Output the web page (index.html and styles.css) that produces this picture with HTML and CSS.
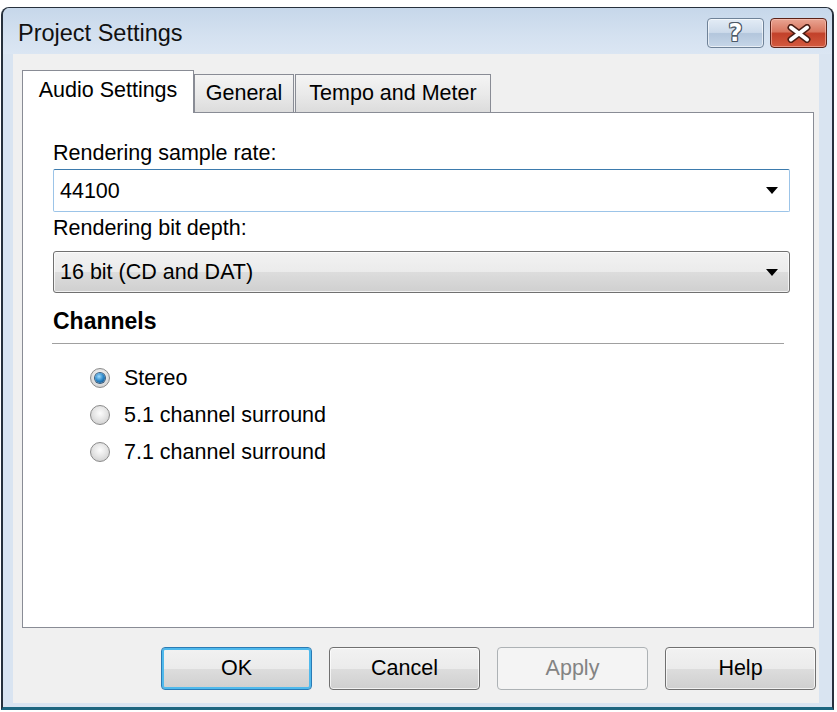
FILE: index.html
```html
<!DOCTYPE html>
<html lang="en">
<head>
    <meta charset="UTF-8">
    <title>Project Settings</title>
    <link rel="stylesheet" href="styles.css">
</head>
<body>
    <div class="window">
        <!-- Title bar -->
        <div class="titlebar">
            <span class="title">Project Settings</span>
            <div class="caption-buttons">
                <span class="cap-btn help-btn">?</span>
                <span class="cap-btn close-btn">
                    <svg width="26" height="19" viewBox="0 0 26 19">
                        <path d="M5 3.5 L21 15.5 M21 3.5 L5 15.5" stroke="#4a1d14" stroke-width="7" stroke-linecap="round"/>
                        <path d="M5 3.5 L21 15.5 M21 3.5 L5 15.5" stroke="#fff" stroke-width="4" stroke-linecap="round"/>
                    </svg>
                </span>
            </div>
        </div>

        <div class="client">
            <!-- Tabs -->
            <div class="tabs">
                <div class="tab active">Audio Settings</div>
                <div class="tab general">General</div>
                <div class="tab tempo">Tempo and Meter</div>
            </div>

            <div class="panel">
                <div class="label">Rendering sample rate:</div>
                <div class="combo editable">
                    <span>44100</span>
                    <span class="arrow"></span>
                </div>

                <div class="label depth">Rendering bit depth:</div>
                <div class="combo dropdown">
                    <span>16 bit (CD and DAT)</span>
                    <span class="arrow"></span>
                </div>

                <div class="group-title">Channels</div>
                <div class="separator"></div>

                <div class="radios">
                    <div class="radio checked"><span class="circle"></span>Stereo</div>
                    <div class="radio"><span class="circle"></span>5.1 channel surround</div>
                    <div class="radio"><span class="circle"></span>7.1 channel surround</div>
                </div>
            </div>

            <!-- Dialog buttons -->
            <div class="buttons">
                <div class="btn default">OK</div>
                <div class="btn">Cancel</div>
                <div class="btn disabled">Apply</div>
                <div class="btn">Help</div>
            </div>
        </div>
    </div>
</body>
</html>
```

FILE: styles.css
```css
* {
    margin: 0;
    padding: 0;
    box-sizing: border-box;
}
body {
    font-family: "Liberation Sans", Arial, sans-serif;
    font-size: 21.5px;
    color: #000;
    background: #fff;
}

/* Window frame */
.window {
    width: 833px;
    height: 703px;
    margin: 7px 0 0 1px;
    display: flex;
    flex-direction: column;
    background: #d9e4f1;
    border: 2px solid #27313d;
    border-top-width: 1px;
    border-bottom: 3px solid #1d6680;
    border-radius: 8px 8px 0 0;
    padding-bottom: 4px;
}
.titlebar {
    height: 46px;
    flex-shrink: 0;
    display: flex;
    align-items: center;
    justify-content: space-between;
    padding: 4px 5px 0 15px;
    background: linear-gradient(#c6d7ea, #d4e1f0 60%, #dbe6f3);
    border-radius: 7px 7px 0 0;
}
.title {
    font-size: 23.5px;
    color: #111;
}
.caption-buttons {
    display: flex;
    gap: 6px;
}
.cap-btn {
    width: 57px;
    height: 30px;
    border-radius: 4px;
    display: flex;
    align-items: center;
    justify-content: center;
}
.help-btn {
    border: 1px solid #6f8298;
    background: linear-gradient(#e3ecf6, #ccdaea 48%, #b3c6dc 52%, #c6d6e8);
    box-shadow: inset 0 0 0 1px rgba(255, 255, 255, 0.6);
    font-family: "DejaVu Sans", sans-serif;
    font-weight: bold;
    font-size: 24px;
    line-height: 1;
    color: #fff;
    text-shadow: 1px 0 #4d5a68, -1px 0 #4d5a68, 0 1px #4d5a68, 0 -1px #4d5a68,
        1px 1px #4d5a68, -1px -1px #4d5a68, 1px -1px #4d5a68, -1px 1px #4d5a68;
}
.close-btn {
    border: 1px solid #5b2218;
    background: linear-gradient(#e9a593, #d8755e 45%, #c2412a 52%, #d35a3f);
    box-shadow: inset 0 0 0 1px rgba(255, 210, 200, 0.5);
}

/* Client area */
.client {
    flex: 1;
    margin: 0 13px 0 10px;
    background: #f0f0f0;
    padding: 16px 3px 13px 9px;
    display: flex;
    flex-direction: column;
}
.tabs {
    display: flex;
    align-items: flex-end;
    height: 42px;
}
.tab {
    height: 38px;
    border: 1px solid #898c95;
    border-bottom: none;
    background: linear-gradient(#f4f4f4, #eaeaea 50%, #dcdcdc);
    display: flex;
    align-items: center;
    justify-content: center;
}
.tab.active {
    width: 172px;
    height: 43px;
    margin-bottom: -1px;
    background: #fff;
    position: relative;
    z-index: 1;
    padding-bottom: 3px;
}
.tab.general {
    width: 100px;
}
.tab.tempo {
    width: 196px;
    margin-left: 1px;
}
.panel {
    flex: 1;
    margin-right: 2px;
    background: #fff;
    border: 1px solid #898c95;
    padding: 27px 23px 0 30px;
}
.label {
    line-height: 26px;
}
.label.depth {
    margin-top: 3px;
}
.combo {
    display: flex;
    align-items: center;
    justify-content: space-between;
    line-height: 26px;
    padding: 0 11px 0 6px;
}
.combo.editable {
    height: 43px;
    margin-top: 3px;
    border: 1px solid #9cc4e8;
    border-top-color: #3d7bad;
    border-radius: 2px;
}
.combo.dropdown {
    height: 42px;
    margin-top: 10px;
    border: 1px solid #707070;
    border-radius: 3px;
    background: linear-gradient(#f2f2f2, #ebebeb 50%, #dddddd 50%, #cfcfcf);
    box-shadow: inset 0 0 0 1px rgba(255, 255, 255, 0.7);
}
.arrow {
    width: 0;
    height: 0;
    border-left: 6px solid transparent;
    border-right: 6px solid transparent;
    border-top: 7px solid #000;
}
.group-title {
    margin-top: 14px;
    font-size: 23px;
    font-weight: bold;
    line-height: 28px;
}
.separator {
    margin: 8px 6px 0 -1px;
    height: 2px;
    border-top: 1px solid #a0a0a0;
    border-bottom: 1px solid #fff;
}
.radios {
    margin-top: 14px;
    padding-left: 37px;
}
.radio {
    height: 37px;
    display: flex;
    align-items: center;
    line-height: 26px;
}
.circle {
    width: 20px;
    height: 20px;
    margin-right: 14px;
    border-radius: 50%;
    border: 1px solid #8b8b8b;
    background: radial-gradient(circle at 50% 40%, #fdfdfd, #e3e3e3 50%, #c4c4c4);
    display: flex;
    align-items: center;
    justify-content: center;
}
.radio.checked .circle::after {
    content: "";
    width: 10px;
    height: 10px;
    border-radius: 50%;
    background: radial-gradient(circle at 40% 35%, #9fdcff, #2a86c8 50%, #0b3f70);
    box-shadow: 0 0 0 1px #3c5f7e;
}

/* Buttons */
.buttons {
    margin-top: 19px;
    display: flex;
    justify-content: flex-end;
    gap: 17px;
}
.btn {
    width: 151px;
    height: 43px;
    border: 1px solid #707070;
    border-radius: 4px;
    background: linear-gradient(#f2f2f2, #ebebeb 50%, #dddddd 50%, #cfcfcf);
    box-shadow: inset 0 0 0 1px rgba(255, 255, 255, 0.7);
    display: flex;
    align-items: center;
    justify-content: center;
}
.btn.default {
    border: 1px solid #2a7bb5;
    box-shadow: inset 0 0 0 2px #4fb9ec;
}
.btn.disabled {
    border-color: #adb2b5;
    background: #f4f4f4;
    color: #838383;
    box-shadow: none;
}
```
